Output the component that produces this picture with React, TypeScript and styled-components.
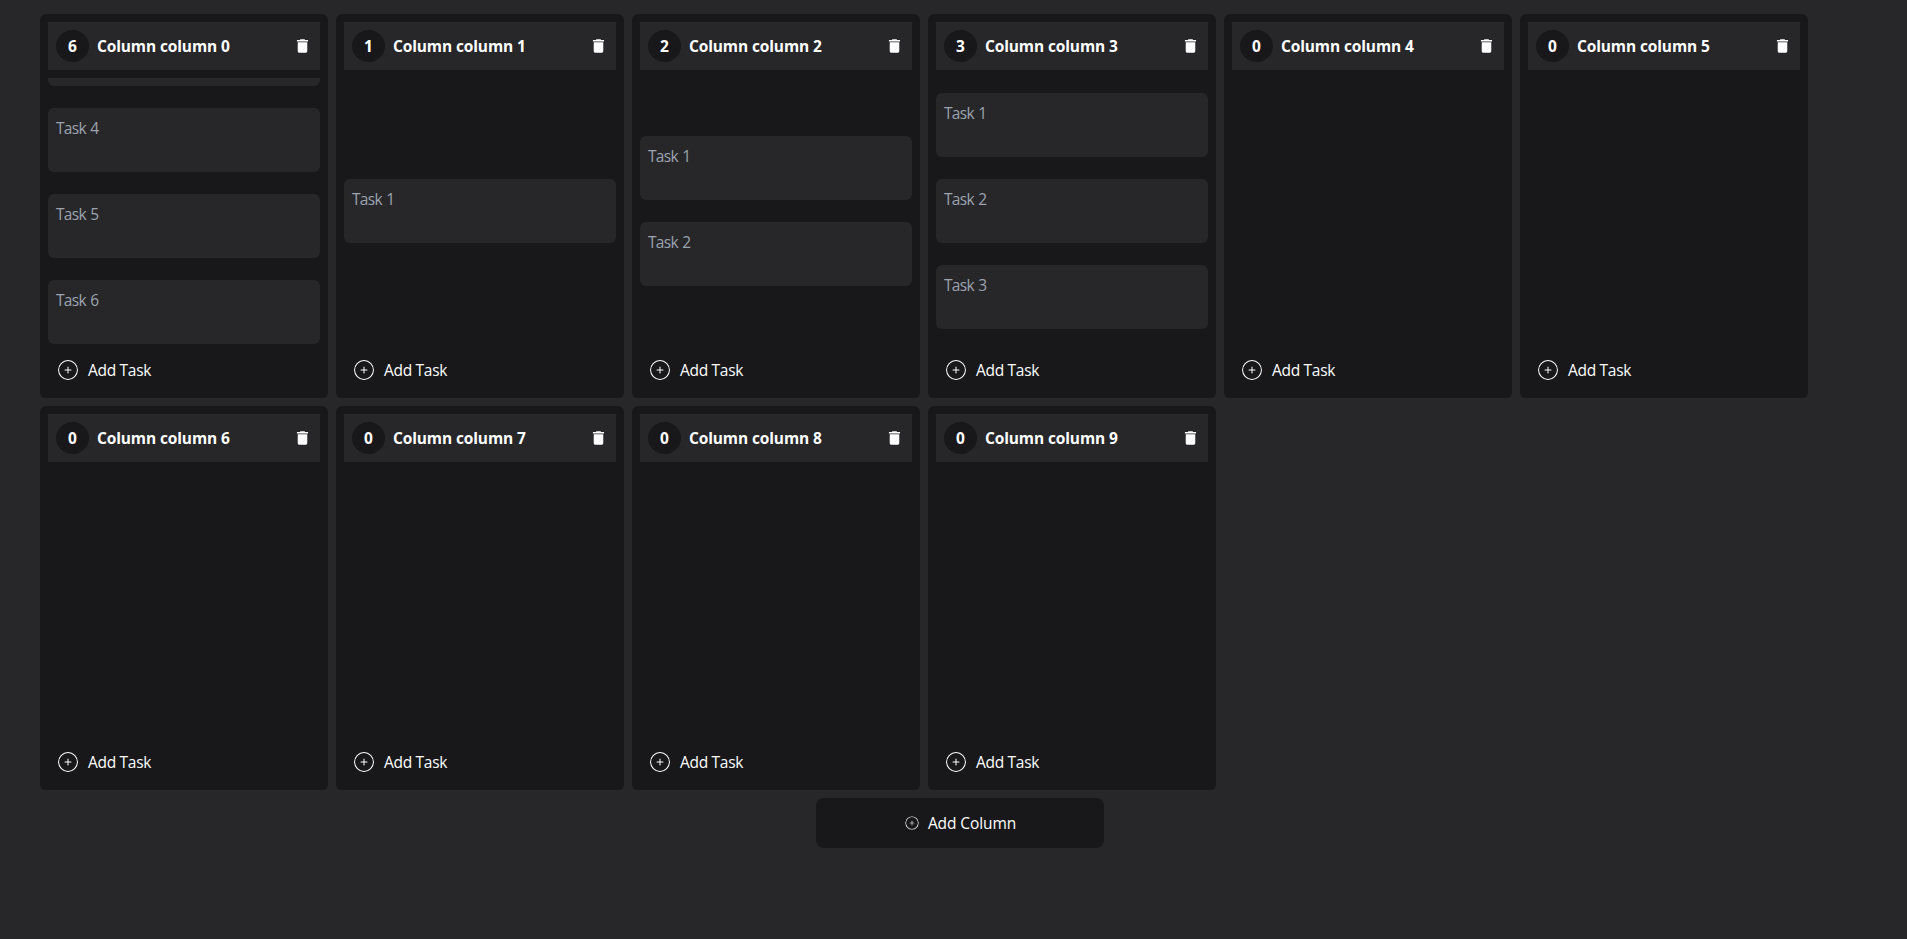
import styled, { createGlobalStyle } from "styled-components";
import { MdDelete } from "react-icons/md";
import { CiCirclePlus } from "react-icons/ci";

const GlobalStyle = createGlobalStyle`
  *, *::before, *::after { box-sizing: border-box; }
  body {
    margin: 0;
    min-height: 100vh;
    background: #27272a;
    color: #fff;
    font-family: "Open Sans", "Noto Sans", sans-serif;
    font-size: 15.5px;
    line-height: 24px;
  }
  button { font: inherit; color: inherit; border: 0; background: none; padding: 0; cursor: pointer; }
`;

const Board = styled.main`
  display: flex;
  flex-direction: column;
  align-items: center;
  gap: 8px;
  width: 1840px;
  margin-left: 40px;
  padding-top: 14px;
`;

const Columns = styled.div`
  display: flex;
  flex-wrap: wrap;
  gap: 8px;
  width: 100%;
`;

const Column = styled.section`
  display: flex;
  flex-direction: column;
  width: 288px;
  height: 384px;
  padding: 8px;
  border-radius: 6px;
  background: #18181b;
`;

const Header = styled.header`
  display: flex;
  flex: none;
  align-items: center;
  gap: 8px;
  height: 48px;
  padding: 0 8px;
  background: #27272a;
  font-weight: 700;
`;

const Count = styled.span`
  display: flex;
  align-items: center;
  justify-content: center;
  width: 33px;
  height: 32px;
  border-radius: 50%;
  background: #18181b;
`;

const Title = styled.h2`
  flex: 1;
  margin: 0;
  font-size: inherit;
  font-weight: 700;
  letter-spacing: -0.13px;
`;

const DeleteButton = styled.button`
  display: flex;
`;

const TrashIcon = styled(MdDelete)`
  width: 19px;
  height: 18px;
`;

const TaskList = styled.div<{ $scrolled: boolean }>`
  display: flex;
  flex: 1;
  flex-direction: column;
  justify-content: ${(p) => (p.$scrolled ? "flex-end" : "center")};
  gap: 22px;
  min-height: 0;
  margin-top: 8px;
  overflow: hidden;
`;

const Task = styled.article`
  flex: none;
  height: 64px;
  padding: 8px;
  border-radius: 6px;
  background: #27272a;
  color: #9ca3af;
  letter-spacing: -0.7px;
  word-spacing: 1px;
`;

const AddTask = styled.button`
  display: flex;
  flex: none;
  align-items: center;
  gap: 8px;
  height: 46px;
  padding: 6px 8px 0;
  letter-spacing: -0.3px;
`;

const AddColumn = styled.button`
  display: flex;
  align-items: center;
  justify-content: center;
  gap: 8px;
  width: 288px;
  height: 50px;
  border-radius: 8px;
  background: #18181b;
  letter-spacing: -0.1px;
`;

const VISIBLE_TASKS = 3;
const taskCounts = [6, 1, 2, 3, 0, 0, 0, 0, 0, 0];

function Tasks({ count }: { count: number }) {
  const first = Math.max(0, count - VISIBLE_TASKS);
  return (
    <TaskList $scrolled={first > 0}>
      {/* only the lower edge of the previous card shows above the list */}
      {first > 0 && <Task aria-hidden />}
      {Array.from({ length: count - first }, (_, i) => (
        <Task key={i}>{`Task ${first + i + 1}`}</Task>
      ))}
    </TaskList>
  );
}

export default function App() {
  return (
    <>
      <GlobalStyle />
      <Board>
        <Columns>
          {taskCounts.map((count, index) => (
            <Column key={index}>
              <Header>
                <Count>{count}</Count>
                <Title>{`Column column ${index}`}</Title>
                <DeleteButton aria-label="Delete column">
                  <TrashIcon preserveAspectRatio="none" />
                </DeleteButton>
              </Header>
              <Tasks count={count} />
              <AddTask>
                <CiCirclePlus size={24} />
                Add Task
              </AddTask>
            </Column>
          ))}
        </Columns>
        <AddColumn>
          <CiCirclePlus size={16} />
          Add Column
        </AddColumn>
      </Board>
    </>
  );
}
